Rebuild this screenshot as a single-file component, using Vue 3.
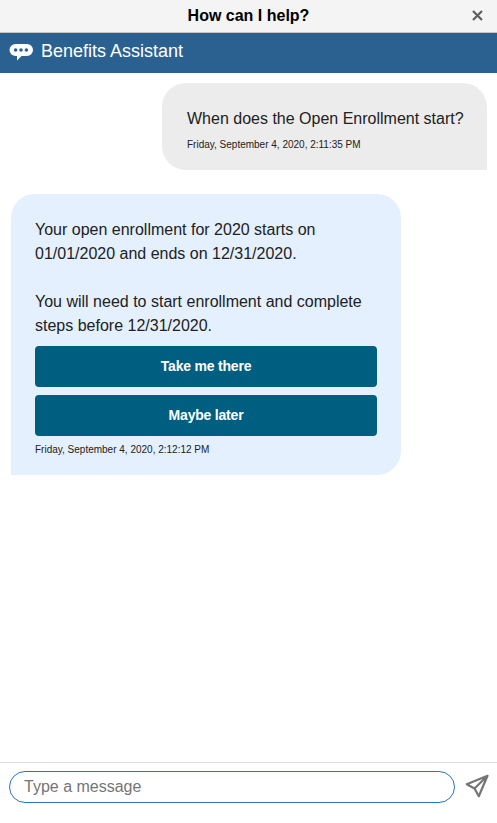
<script setup>
const answerLines = [
  'Your open enrollment for 2020 starts on',
  '01/01/2020 and ends on 12/31/2020.',
  '',
  'You will need to start enrollment and complete',
  'steps before 12/31/2020.'
]
const actions = ['Take me there', 'Maybe later']
</script>

<template>
  <div class="app">
    <div class="titlebar">
      <span class="title">How can I help?</span>
      <button class="close" aria-label="Close">
        <svg width="11" height="11" viewBox="0 0 11 11"><path d="M1 1l9 9M10 1l-9 9" stroke="#5f5f5f" stroke-width="2.2" fill="none"/></svg>
      </button>
    </div>
    <header class="brand">
      <svg class="brand-icon" width="25" height="20" viewBox="0 0 25 20">
        <path d="M6.500 1h11.500a6 6 0 0 1 0 12h-5.500l-4.500 4.500V13H6.500a6 6 0 0 1 0-12z" fill="#fff"/>
        <circle cx="6.600" cy="7" r="1.800" fill="#2a6190"/>
        <circle cx="12" cy="7" r="1.800" fill="#2a6190"/>
        <circle cx="17.400" cy="7" r="1.800" fill="#2a6190"/>
      </svg>
      <span>Benefits Assistant</span>
    </header>
    <main class="messages">
      <div class="bubble user">
        <p class="question">When does the Open Enrollment start?</p>
        <div class="time">Friday, September 4, 2020, 2:11:35 PM</div>
      </div>
      <div class="bubble bot">
        <p v-for="(line, i) in answerLines" :key="i" class="line">{{ line || '\u00a0' }}</p>
        <div class="actions">
          <button v-for="a in actions" :key="a" class="action">{{ a }}</button>
        </div>
        <div class="time bot-time">Friday, September 4, 2020, 2:12:12 PM</div>
      </div>
    </main>
    <footer class="composer">
      <div class="input">Type a message</div>
      <svg class="send" width="24" height="24" viewBox="0 0 24 24">
        <path d="M22.500 1.800L1.800 10.200l7.700 4.300 4.300 7.700z M22.500 1.800L9.500 14.500" fill="none" stroke="#757575" stroke-width="2.2" stroke-linejoin="round"/>
      </svg>
    </footer>
  </div>
</template>

<style scoped>
.app {
  width: 497px;
  height: 823px;
  display: flex;
  flex-direction: column;
  background: #fff;
  font-family: "Liberation Sans", Arial, sans-serif;
  color: #212121;
  overflow: hidden;
}
.titlebar {
  height: 32px;
  flex: none;
  background: #f4f4f4;
  border-bottom: 1px solid #c4c4c4;
  display: flex;
  align-items: center;
  justify-content: center;
  position: relative;
}
.title {
  font-size: 16px;
  font-weight: 700;
  color: #000;
}
.close {
  position: absolute;
  right: 14px;
  top: 10px;
  padding: 0;
  border: 0;
  background: none;
  display: flex;
}
.brand {
  height: 40px;
  flex: none;
  background: #2a6190;
  color: #fff;
  display: flex;
  align-items: center;
  font-size: 18px;
  padding-left: 9px;
  gap: 7px;
}
.brand span { position: relative; top: -2px; }
.messages {
  flex: 1;
  display: flex;
  flex-direction: column;
  padding: 10px 10px 0 11px;
  gap: 24px;
}
.bubble { border-radius: 24px; box-sizing: border-box; }
.user {
  align-self: flex-end;
  width: 325px;
  height: 87px;
  background: #ececec;
  border-bottom-right-radius: 0;
  padding: 25px 20px 0 25px;
}
.question {
  margin: 0;
  font-size: 16px;
  line-height: 22px;
  white-space: nowrap;
}
.time {
  font-size: 10px;
  line-height: 12px;
  margin-top: 9px;
  color: #212121;
}
.bot {
  width: 390px;
  height: 281px;
  background: #e4f0fe;
  border-bottom-left-radius: 0;
  padding: 24px 24px 0;
}
.line {
  margin: 0;
  font-size: 16px;
  line-height: 24px;
}
.actions {
  display: flex;
  flex-direction: column;
  gap: 8px;
  margin-top: 8px;
}
.action {
  height: 41px;
  border: 0;
  border-radius: 4px;
  background: #005f80;
  color: #fff;
  font: 700 14px "Liberation Sans", Arial, sans-serif;
  letter-spacing: -0.2px;
  padding: 0 0 2px;
}
.bot-time { margin-top: 8px; }
.composer {
  height: 61px;
  flex: none;
  box-sizing: border-box;
  border-top: 1px solid #dcdcdc;
  display: flex;
  align-items: flex-start;
  padding: 8px 0 0 9px;
}
.input {
  width: 446px;
  height: 32px;
  box-sizing: border-box;
  border: 1px solid #2a72c4;
  border-radius: 16px;
  padding-left: 14px;
  font-size: 16px;
  line-height: 30px;
  color: #757575;
}
.send { margin: 3px 0 0 10px; }
</style>

<style>
html, body { margin: 0; background: #fff; }
</style>
